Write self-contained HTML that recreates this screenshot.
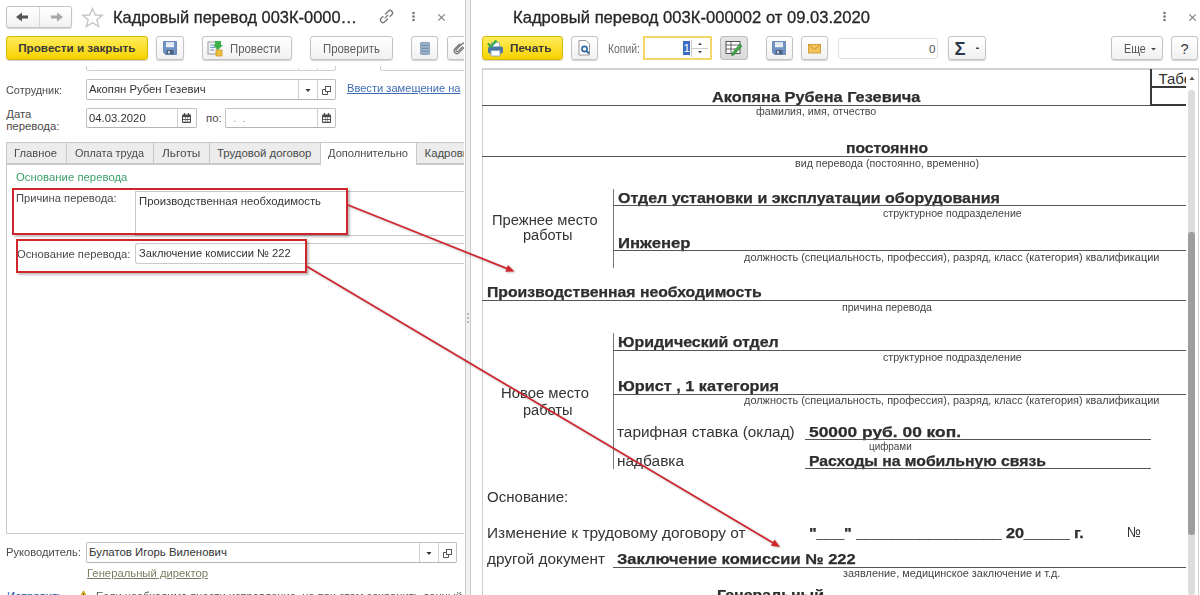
<!DOCTYPE html>
<html><head><meta charset="utf-8"><style>
html,body{margin:0;padding:0}
body{width:1200px;height:595px;position:relative;overflow:hidden;background:#fff;font-family:"Liberation Sans",sans-serif}
.t{position:absolute;white-space:pre;transform-origin:0 0;font-family:"Liberation Sans",sans-serif}
</style></head><body>
<div style="position:absolute;left:0;top:0;width:464px;height:595px;overflow:hidden">
<div style="position:absolute;left:6px;top:6px;width:66px;height:22px;border:1px solid #c4c4c4;border-radius:3px;background:linear-gradient(#ffffff,#f1f1f1);box-shadow:0 1px 1px rgba(0,0,0,0.18);box-sizing:border-box"></div>
<div style="position:absolute;left:39px;top:7px;width:1px;height:20px;background:#d8d8d8"></div>
<svg style="position:absolute;left:14px;top:10px;" width="16" height="14" viewBox="0 0 16 14"><path d="M2 7 L8 2.5 L8 5.6 L14 5.6 L14 8.4 L8 8.4 L8 11.5 Z" fill="#555"/></svg>
<svg style="position:absolute;left:49px;top:10px;" width="16" height="14" viewBox="0 0 16 14"><path d="M14 7 L8 2.5 L8 5.6 L2 5.6 L2 8.4 L8 8.4 L8 11.5 Z" fill="#a8a8a8"/></svg>
<svg style="position:absolute;left:81px;top:7px;" width="23" height="21" viewBox="0 0 23 21"><path d="M11.5 1.5 L14.3 8 L21.3 8.3 L15.8 12.7 L17.7 19.5 L11.5 15.6 L5.3 19.5 L7.2 12.7 L1.7 8.3 L8.7 8 Z" fill="none" stroke="#c4c4c4" stroke-width="1.3"/></svg>
<div class="t" style="left:113.0px;top:8.72px;font-size:16.4px;line-height:16.4px;font-weight:400;color:#262626;transform:scaleX(1.0021);-webkit-text-stroke:0.3px #262626">Кадровый перевод 003К-0000…</div>
<svg style="position:absolute;left:378px;top:8px;" width="17" height="17" viewBox="0 0 17 17"><g transform="rotate(-45 8.5 8.5)" fill="none" stroke="#7a7a7a" stroke-width="1.3" stroke-linecap="round"><path d="M9.5 6 H13.5 A2.5 2.5 0 0 1 13.5 11 H11"/><path d="M7.5 11 H3.5 A2.5 2.5 0 0 1 3.5 6 H6"/><path d="M6.5 8.5 H10.5"/></g></svg>
<svg style="position:absolute;left:411px;top:11px;" width="5" height="11" viewBox="0 0 5 11"><g fill="#777"><circle cx="2.5" cy="2" r="1.3"/><circle cx="2.5" cy="5.5" r="1.3"/><circle cx="2.5" cy="9" r="1.3"/></g></svg>
<svg style="position:absolute;left:436.5px;top:12.5px;" width="9" height="9" viewBox="0 0 9 9"><path d="M1.3 1.3 L7.7 7.7 M7.7 1.3 L1.3 7.7" stroke="#7a7a7a" stroke-width="1.1"/></svg>
<div style="position:absolute;left:6px;top:36px;width:142px;height:24px;border:1px solid #d7b800;border-radius:3px;background:linear-gradient(#ffec5c,#f7d200);box-shadow:0 1px 1px rgba(0,0,0,0.18);box-sizing:border-box"></div>
<div class="t" style="left:18.2px;top:42.40px;font-size:11.7px;line-height:11.7px;font-weight:700;color:#3a3a3a;">Провести и закрыть</div>
<div style="position:absolute;left:156px;top:36px;width:28px;height:24px;border:1px solid #c4c4c4;border-radius:3px;background:linear-gradient(#ffffff,#f1f1f1);box-shadow:0 1px 1px rgba(0,0,0,0.18);box-sizing:border-box"></div>
<svg style="position:absolute;left:163px;top:41px;" width="14" height="14" viewBox="0 0 14 14"><path d="M0.5 0.5 H13.5 V13.5 H2.5 L0.5 11.5 Z" fill="#6f93c4" stroke="#5b7fb2" stroke-width="0.8"/><rect x="3" y="1.2" width="8" height="5" fill="#eef2f7"/><path d="M3.5 3h7" stroke="#c9d4e2" stroke-width="0.8"/><rect x="3.5" y="9" width="7" height="4.3" fill="#4d5f78"/><rect x="5" y="10" width="2" height="2.5" fill="#c8d2de"/></svg>
<div style="position:absolute;left:202px;top:36px;width:90px;height:24px;border:1px solid #c4c4c4;border-radius:3px;background:linear-gradient(#ffffff,#f1f1f1);box-shadow:0 1px 1px rgba(0,0,0,0.18);box-sizing:border-box"></div>
<svg style="position:absolute;left:207px;top:40px;" width="17" height="17" viewBox="0 0 17 17"><rect x="1" y="2" width="9" height="12" fill="#f4f4f4" stroke="#9a9a9a"/><path d="M3 5h5M3 7.5h5M3 10h4" stroke="#6a9ad0" stroke-width="1"/><path d="M8 1 L14 1 L14 5 L16 5 L11 10 L6 5 L8 5 Z" fill="#3db04a"/><rect x="9" y="10" width="6" height="6" fill="#f0c040" stroke="#c89a20" stroke-width="0.8"/></svg>
<div class="t" style="left:229.7px;top:42.76px;font-size:12.1px;line-height:12.1px;font-weight:400;color:#5e5e5e;transform:scaleX(0.9399);">Провести</div>
<div style="position:absolute;left:310px;top:36px;width:83px;height:24px;border:1px solid #c4c4c4;border-radius:3px;background:linear-gradient(#ffffff,#f1f1f1);box-shadow:0 1px 1px rgba(0,0,0,0.18);box-sizing:border-box"></div>
<div class="t" style="left:323.0px;top:42.76px;font-size:12.1px;line-height:12.1px;font-weight:400;color:#5e5e5e;transform:scaleX(0.9424);">Проверить</div>
<div style="position:absolute;left:411px;top:36px;width:27px;height:24px;border:1px solid #c4c4c4;border-radius:3px;background:linear-gradient(#ffffff,#f1f1f1);box-shadow:0 1px 1px rgba(0,0,0,0.18);box-sizing:border-box"></div>
<svg style="position:absolute;left:420px;top:42px;" width="10" height="13" viewBox="0 0 10 13"><g fill="#9db2c8" stroke="#6d8aa8" stroke-width="0.8"><rect x="0.4" y="0.4" width="9.2" height="3" rx="1.2"/><rect x="0.4" y="3.4" width="9.2" height="3" rx="1.2"/><rect x="0.4" y="6.4" width="9.2" height="3" rx="1.2"/><rect x="0.4" y="9.4" width="9.2" height="3" rx="1.2"/></g></svg>
<div style="position:absolute;left:447px;top:36px;width:28px;height:24px;border:1px solid #c4c4c4;border-radius:3px;background:linear-gradient(#ffffff,#f1f1f1);box-shadow:0 1px 1px rgba(0,0,0,0.18);box-sizing:border-box"></div>
<svg style="position:absolute;left:451px;top:39px;" width="18" height="18" viewBox="0 0 18 18"><g transform="rotate(45 9 9)"><path d="M10 6 L10 12.5 Q10 14 8.75 14 Q7.5 14 7.5 12.5 L7.5 4.5 Q7.5 2.5 9.5 2.5 Q11.5 2.5 11.5 4.5 L11.5 13 Q11.5 16 9 16 Q6 16 6 13 L6 6" fill="none" stroke="#6e6e6e" stroke-width="1.2"/></g></svg>
<div style="position:absolute;left:86px;top:66px;width:250px;height:5px;border:1px solid #cfcfcf;border-top:none;border-radius:0 0 3px 3px;box-sizing:border-box"></div>
<div style="position:absolute;left:298px;top:68px;width:1px;height:2px;background:#d8d8d8"></div>
<div style="position:absolute;left:317px;top:68px;width:1px;height:2px;background:#d8d8d8"></div>
<div style="position:absolute;left:380px;top:66px;width:100px;height:5px;border:1px solid #cfcfcf;border-top:none;border-radius:0 0 3px 3px;box-sizing:border-box"></div>
<div class="t" style="left:6.2px;top:84.55px;font-size:11.4px;line-height:11.4px;font-weight:400;color:#4a4a4a;transform:scaleX(0.9573);">Сотрудник:</div>
<div style="position:absolute;left:86px;top:79px;width:250px;height:21px;border:1px solid #c2c2c2;border-bottom-color:#b4b4b4;border-radius:2px;background:#fff;box-sizing:border-box"></div>
<div style="position:absolute;left:298px;top:80px;width:1px;height:19px;background:#d0d0d0"></div>
<div style="position:absolute;left:317px;top:80px;width:1px;height:19px;background:#d0d0d0"></div>
<div class="t" style="left:89.4px;top:84.35px;font-size:11.4px;line-height:11.4px;font-weight:400;color:#333;transform:scaleX(0.9905);">Акопян Рубен Гезевич</div>
<svg style="position:absolute;left:305px;top:88px;" width="6" height="5" viewBox="0 0 6 5"><path d="M0.5 1 L5.5 1 L3 4 Z" fill="#333"/></svg>
<svg style="position:absolute;left:321px;top:85px;" width="11" height="11" viewBox="0 0 11 11"><g fill="none" stroke="#555" stroke-width="1"><rect x="4.5" y="1.5" width="5" height="5"/><path d="M4 4.5 H1.5 V9.5 H6.5 V7"/></g></svg>
<div class="t" style="left:346.8px;top:82.65px;font-size:11.4px;line-height:11.4px;font-weight:400;color:#3d6bb3;transform:scaleX(0.9752);text-decoration:underline">Ввести замещение на</div>
<div class="t" style="left:6.2px;top:109.35px;font-size:11.4px;line-height:11.4px;font-weight:400;color:#4a4a4a;">Дата</div>
<div class="t" style="left:6.2px;top:121.35px;font-size:11.4px;line-height:11.4px;font-weight:400;color:#4a4a4a;">перевода:</div>
<div style="position:absolute;left:86px;top:108px;width:111px;height:20px;border:1px solid #c2c2c2;border-bottom-color:#b4b4b4;border-radius:2px;background:#fff;box-sizing:border-box"></div>
<div style="position:absolute;left:177px;top:109px;width:1px;height:18px;background:#d0d0d0"></div>
<div class="t" style="left:89.4px;top:112.85px;font-size:11.4px;line-height:11.4px;font-weight:400;color:#333;transform:scaleX(0.9945);">04.03.2020</div>
<svg style="position:absolute;left:182px;top:113px;" width="9" height="10" viewBox="0 0 9 10"><g><rect x="0" y="1.5" width="9" height="8.5" rx="1" fill="#4a4a4a"/><rect x="1.8" y="0" width="1.4" height="2.6" rx="0.5" fill="#4a4a4a"/><rect x="5.8" y="0" width="1.4" height="2.6" rx="0.5" fill="#4a4a4a"/><g fill="#fff"><rect x="1" y="4.2" width="2" height="1.8"/><rect x="3.5" y="4.2" width="2" height="1.8"/><rect x="6" y="4.2" width="2" height="1.8"/><rect x="1" y="6.9" width="2" height="1.8"/><rect x="3.5" y="6.9" width="2" height="1.8"/><rect x="6" y="6.9" width="2" height="1.8"/></g></g></svg>
<div class="t" style="left:206.0px;top:112.85px;font-size:11.4px;line-height:11.4px;font-weight:400;color:#4a4a4a;">по:</div>
<div style="position:absolute;left:225px;top:108px;width:111px;height:20px;border:1px solid #c2c2c2;border-bottom-color:#b4b4b4;border-radius:2px;background:#fff;box-sizing:border-box"></div>
<div style="position:absolute;left:317px;top:109px;width:1px;height:18px;background:#d0d0d0"></div>
<div class="t" style="left:233.0px;top:112.85px;font-size:11.4px;line-height:11.4px;font-weight:400;color:#999;">.  .</div>
<svg style="position:absolute;left:322px;top:113px;" width="9" height="10" viewBox="0 0 9 10"><g><rect x="0" y="1.5" width="9" height="8.5" rx="1" fill="#4a4a4a"/><rect x="1.8" y="0" width="1.4" height="2.6" rx="0.5" fill="#4a4a4a"/><rect x="5.8" y="0" width="1.4" height="2.6" rx="0.5" fill="#4a4a4a"/><g fill="#fff"><rect x="1" y="4.2" width="2" height="1.8"/><rect x="3.5" y="4.2" width="2" height="1.8"/><rect x="6" y="4.2" width="2" height="1.8"/><rect x="1" y="6.9" width="2" height="1.8"/><rect x="3.5" y="6.9" width="2" height="1.8"/><rect x="6" y="6.9" width="2" height="1.8"/></g></g></svg>
<div style="position:absolute;left:6px;top:164px;width:460px;height:370px;border:1px solid #c9c9c9;box-sizing:border-box;background:#fff"></div>
<div style="position:absolute;left:6px;top:142px;width:61px;height:22px;border:1px solid #c9c9c9;box-sizing:border-box;background:#ececec"></div>
<div class="t" style="left:14.4px;top:147.85px;font-size:11.4px;line-height:11.4px;font-weight:400;color:#4a4a4a;transform:scaleX(0.9878);">Главное</div>
<div style="position:absolute;left:66px;top:142px;width:88px;height:22px;border:1px solid #c9c9c9;box-sizing:border-box;background:#ececec"></div>
<div class="t" style="left:75.0px;top:147.85px;font-size:11.4px;line-height:11.4px;font-weight:400;color:#4a4a4a;transform:scaleX(0.9573);">Оплата труда</div>
<div style="position:absolute;left:153px;top:142px;width:57px;height:22px;border:1px solid #c9c9c9;box-sizing:border-box;background:#ececec"></div>
<div class="t" style="left:161.6px;top:147.85px;font-size:11.4px;line-height:11.4px;font-weight:400;color:#4a4a4a;transform:scaleX(1.0431);">Льготы</div>
<div style="position:absolute;left:209px;top:142px;width:112px;height:22px;border:1px solid #c9c9c9;box-sizing:border-box;background:#ececec"></div>
<div class="t" style="left:217.0px;top:147.85px;font-size:11.4px;line-height:11.4px;font-weight:400;color:#4a4a4a;">Трудовой договор</div>
<div style="position:absolute;left:320px;top:142px;width:97px;height:23px;border:1px solid #c9c9c9;border-bottom:none;box-sizing:border-box;background:#fff"></div>
<div class="t" style="left:328.0px;top:147.85px;font-size:11.4px;line-height:11.4px;font-weight:400;color:#4a4a4a;transform:scaleX(0.9758);">Дополнительно</div>
<div style="position:absolute;left:416px;top:142px;width:65px;height:22px;border:1px solid #c9c9c9;box-sizing:border-box;background:#ececec"></div>
<div class="t" style="left:424.5px;top:147.85px;font-size:11.4px;line-height:11.4px;font-weight:400;color:#4a4a4a;">Кадровый перевод</div>
<div class="t" style="left:16.0px;top:171.85px;font-size:11.4px;line-height:11.4px;font-weight:400;color:#3c9f67;transform:scaleX(0.9967);">Основание перевода</div>
<div class="t" style="left:16.0px;top:193.35px;font-size:11.4px;line-height:11.4px;font-weight:400;color:#4a4a4a;transform:scaleX(0.9823);">Причина перевода:</div>
<div style="position:absolute;left:135px;top:191px;width:331px;height:45px;border:1px solid #c9c9c9;border-right:none;box-sizing:border-box;background:#fff"></div>
<div class="t" style="left:138.7px;top:195.85px;font-size:11.4px;line-height:11.4px;font-weight:400;color:#333;transform:scaleX(0.9929);">Производственная необходимость</div>
<div class="t" style="left:16.8px;top:249.15px;font-size:11.4px;line-height:11.4px;font-weight:400;color:#4a4a4a;transform:scaleX(0.9876);">Основание перевода:</div>
<div style="position:absolute;left:135px;top:243px;width:331px;height:21px;border:1px solid #c9c9c9;border-right:none;border-radius:3px 0 0 3px;box-sizing:border-box;background:#fff"></div>
<div class="t" style="left:138.7px;top:248.35px;font-size:11.4px;line-height:11.4px;font-weight:400;color:#333;transform:scaleX(0.9787);">Заключение комиссии № 222</div>
<div class="t" style="left:6.2px;top:547.35px;font-size:11.4px;line-height:11.4px;font-weight:400;color:#4a4a4a;transform:scaleX(0.9796);">Руководитель:</div>
<div style="position:absolute;left:86px;top:542px;width:371px;height:21px;border:1px solid #c2c2c2;border-bottom-color:#b4b4b4;border-radius:2px;background:#fff;box-sizing:border-box"></div>
<div style="position:absolute;left:419px;top:543px;width:1px;height:19px;background:#d0d0d0"></div>
<div style="position:absolute;left:438px;top:543px;width:1px;height:19px;background:#d0d0d0"></div>
<div class="t" style="left:89.0px;top:547.35px;font-size:11.4px;line-height:11.4px;font-weight:400;color:#333;">Булатов Игорь Виленович</div>
<svg style="position:absolute;left:426px;top:551px;" width="6" height="5" viewBox="0 0 6 5"><path d="M0.5 1 L5.5 1 L3 4 Z" fill="#333"/></svg>
<svg style="position:absolute;left:442px;top:548px;" width="11" height="11" viewBox="0 0 11 11"><g fill="none" stroke="#555" stroke-width="1"><rect x="4.5" y="1.5" width="5" height="5"/><path d="M4 4.5 H1.5 V9.5 H6.5 V7"/></g></svg>
<div class="t" style="left:87.0px;top:568.35px;font-size:11.4px;line-height:11.4px;font-weight:400;color:#7c7c60;transform:scaleX(0.9904);text-decoration:underline">Генеральный директор</div>
<div class="t" style="left:7.0px;top:590.85px;font-size:11.4px;line-height:11.4px;font-weight:400;color:#2f5a9e;text-decoration:underline">Исправить</div>
<svg style="position:absolute;left:78px;top:589.5px;" width="11" height="10" viewBox="0 0 11 10"><path d="M5.5 0.8 L10.5 9.5 L0.5 9.5 Z" fill="#f2c51c" stroke="#b8940a" stroke-width="0.8"/><path d="M5.5 3.5 V6.5" stroke="#333" stroke-width="1"/></svg>
<div class="t" style="left:96.0px;top:590.85px;font-size:11.4px;line-height:11.4px;font-weight:400;color:#555;transform:scaleX(0.9791);">Если необходимо внести исправление, но при этом сохранить данный</div>
</div>
<div style="position:absolute;left:465px;top:0px;width:6px;height:595px;background:#f2f2f2;border-left:1px solid #c9c9c9;border-right:1px solid #c9c9c9;box-sizing:border-box"></div>
<svg style="position:absolute;left:466px;top:312px;" width="4" height="12" viewBox="0 0 4 12"><g fill="#999"><circle cx="2" cy="2" r="0.9"/><circle cx="2" cy="6" r="0.9"/><circle cx="2" cy="10" r="0.9"/></g></svg>
<div class="t" style="left:512.7px;top:8.92px;font-size:16.4px;line-height:16.4px;font-weight:400;color:#262626;transform:scaleX(1.0121);-webkit-text-stroke:0.3px #262626">Кадровый перевод 003К-000002 от 09.03.2020</div>
<svg style="position:absolute;left:1162px;top:11px;" width="5" height="11" viewBox="0 0 5 11"><g fill="#777"><circle cx="2.5" cy="2" r="1.3"/><circle cx="2.5" cy="5.5" r="1.3"/><circle cx="2.5" cy="9" r="1.3"/></g></svg>
<svg style="position:absolute;left:1188px;top:12.5px;" width="9" height="9" viewBox="0 0 9 9"><path d="M1.3 1.3 L7.7 7.7 M7.7 1.3 L1.3 7.7" stroke="#7a7a7a" stroke-width="1.1"/></svg>
<div style="position:absolute;left:482px;top:36px;width:81px;height:24px;border:1px solid #d7b800;border-radius:3px;background:linear-gradient(#ffec5c,#f7d200);box-shadow:0 1px 1px rgba(0,0,0,0.18);box-sizing:border-box"></div>
<svg style="position:absolute;left:486px;top:39px;" width="19" height="18" viewBox="0 0 19 18"><rect x="5.5" y="3.5" width="8" height="5" fill="#fff" stroke="#a0a8b0" stroke-width="0.8"/><rect x="2" y="7.5" width="15" height="7" rx="2" fill="#4b76a6"/><rect x="5" y="11.5" width="9" height="5.5" fill="#fff" stroke="#7f9fc0" stroke-width="0.8"/><path d="M2 4.5 L5 7.5 L10.5 1.5" fill="none" stroke="#33a84c" stroke-width="2.3"/></svg>
<div class="t" style="left:510.0px;top:42.40px;font-size:11.7px;line-height:11.7px;font-weight:700;color:#3a3a3a;transform:scaleX(1.0168);">Печать</div>
<div style="position:absolute;left:571px;top:36px;width:27px;height:24px;border:1px solid #c4c4c4;border-radius:3px;background:linear-gradient(#ffffff,#f1f1f1);box-shadow:0 1px 1px rgba(0,0,0,0.18);box-sizing:border-box"></div>
<svg style="position:absolute;left:578px;top:40px;" width="13" height="16" viewBox="0 0 13 16"><path d="M1 0.5 L8 0.5 L11.5 4 L11.5 15 L1 15 Z" fill="#fff" stroke="#999"/><circle cx="6.5" cy="9" r="2.6" fill="none" stroke="#2f67a8" stroke-width="1.6"/><path d="M8.5 11 L11 13.5" stroke="#2f67a8" stroke-width="2"/></svg>
<div class="t" style="left:607.8px;top:42.59px;font-size:12.3px;line-height:12.3px;font-weight:400;color:#6a6a6a;transform:scaleX(0.8459);">Копий:</div>
<div style="position:absolute;left:643px;top:36px;width:69px;height:24px;border:2px solid #f3d867;border-radius:1px;box-sizing:border-box;background:#fff"></div>
<div style="position:absolute;left:683px;top:41px;width:7px;height:14px;background:#3c6cc4"></div>
<div class="t" style="left:683.5px;top:42.40px;font-size:11.7px;line-height:11.7px;font-weight:400;color:#fff;">1</div>
<div style="position:absolute;left:691px;top:40px;width:1px;height:17px;background:#ccc"></div>
<div style="position:absolute;left:692px;top:48px;width:16px;height:1px;background:#ccc"></div>
<svg style="position:absolute;left:697px;top:41px;" width="6" height="14" viewBox="0 0 6 14"><path d="M1 4 L3 1.5 L5 4 Z M1 10 L3 12.5 L5 10 Z" fill="#555"/></svg>
<div style="position:absolute;left:720px;top:36px;width:28px;height:24px;border:1px solid #bcbcbc;border-radius:3px;background:linear-gradient(#e6e6e6,#dadada);box-sizing:border-box"></div>
<svg style="position:absolute;left:725px;top:40px;" width="18" height="16" viewBox="0 0 18 16"><rect x="1" y="1.5" width="14" height="12" fill="#fff" stroke="#555"/><path d="M1 5h14M1 9h14M6 1.5v12" stroke="#555" stroke-width="0.9"/><path d="M7 13 L15 4 L17 6 L9 15 L6.5 15.5 Z" fill="#43a84a" stroke="#2c7a30" stroke-width="0.6"/></svg>
<div style="position:absolute;left:766px;top:36px;width:27px;height:24px;border:1px solid #c4c4c4;border-radius:3px;background:linear-gradient(#ffffff,#f1f1f1);box-shadow:0 1px 1px rgba(0,0,0,0.18);box-sizing:border-box"></div>
<svg style="position:absolute;left:772px;top:41px;" width="14" height="14" viewBox="0 0 14 14"><path d="M0.5 0.5 H13.5 V13.5 H2.5 L0.5 11.5 Z" fill="#6f93c4" stroke="#5b7fb2" stroke-width="0.8"/><rect x="3" y="1.2" width="8" height="5" fill="#eef2f7"/><path d="M3.5 3h7" stroke="#c9d4e2" stroke-width="0.8"/><rect x="3.5" y="9" width="7" height="4.3" fill="#4d5f78"/><rect x="5" y="10" width="2" height="2.5" fill="#c8d2de"/></svg>
<div style="position:absolute;left:801px;top:36px;width:27px;height:24px;border:1px solid #c4c4c4;border-radius:3px;background:linear-gradient(#ffffff,#f1f1f1);box-shadow:0 1px 1px rgba(0,0,0,0.18);box-sizing:border-box"></div>
<svg style="position:absolute;left:808px;top:44px;" width="13" height="10" viewBox="0 0 13 10"><rect x="0.5" y="0.5" width="12" height="8.5" fill="#f3c45c" stroke="#d09a30" stroke-width="0.9"/><path d="M0.5 0.5 L6.5 5.5 L12.5 0.5" fill="none" stroke="#c98a20" stroke-width="0.9"/></svg>
<div style="position:absolute;left:838px;top:38px;width:100px;height:21px;border:1px solid #e0e0e0;border-radius:3px;box-sizing:border-box;background:#fff"></div>
<div class="t" style="left:929.0px;top:42.60px;font-size:11.7px;line-height:11.7px;font-weight:400;color:#555;">0</div>
<div style="position:absolute;left:948px;top:36px;width:38px;height:24px;border:1px solid #c4c4c4;border-radius:3px;background:linear-gradient(#ffffff,#f1f1f1);box-shadow:0 1px 1px rgba(0,0,0,0.18);box-sizing:border-box"></div>
<div class="t" style="left:954.5px;top:39.84px;font-size:18.5px;line-height:18.5px;font-weight:700;color:#2b3a4a;">Σ</div>
<svg style="position:absolute;left:976px;top:47px;" width="4" height="3" viewBox="0 0 4 3"><rect x="0" y="0.5" width="3" height="1.5" fill="#444"/></svg>
<div style="position:absolute;left:1111px;top:36px;width:52px;height:24px;border:1px solid #c4c4c4;border-radius:3px;background:linear-gradient(#ffffff,#f1f1f1);box-shadow:0 1px 1px rgba(0,0,0,0.18);box-sizing:border-box"></div>
<div class="t" style="left:1123.5px;top:42.76px;font-size:12.1px;line-height:12.1px;font-weight:400;color:#555;transform:scaleX(0.8858);">Еще</div>
<svg style="position:absolute;left:1151px;top:48px;" width="6" height="3" viewBox="0 0 6 3"><path d="M0 0 L5 0 L2.5 2.5 Z" fill="#444"/></svg>
<div style="position:absolute;left:1171px;top:36px;width:27px;height:24px;border:1px solid #c4c4c4;border-radius:3px;background:linear-gradient(#ffffff,#f1f1f1);box-shadow:0 1px 1px rgba(0,0,0,0.18);box-sizing:border-box"></div>
<div class="t" style="left:1180.5px;top:41.73px;font-size:14.5px;line-height:14.5px;font-weight:400;color:#3a3a3a;">?</div>
<div style="position:absolute;left:482px;top:68px;width:717px;height:540px;border:1px solid #cfcfcf;border-top:2px solid #d2d2d2;box-sizing:border-box;background:#fff"></div>
<div style="position:absolute;left:1188px;top:90px;width:7px;height:505px;background:#dcdcdc;border-radius:3px"></div>
<div style="position:absolute;left:1188px;top:232px;width:7px;height:303px;background:#9d9d9d;border-radius:3px"></div>
<svg style="position:absolute;left:1189px;top:76px;" width="6" height="5" viewBox="0 0 6 5"><path d="M0.5 4 L3 0.5 L5.5 4 Z" fill="#555"/></svg>
<div style="position:absolute;left:1150px;top:69px;width:2px;height:37px;background:#3a3a3a"></div>
<div style="position:absolute;left:1150px;top:86px;width:36px;height:2px;background:#3a3a3a"></div>
<div style="position:absolute;left:1150px;top:104px;width:36px;height:2px;background:#3a3a3a"></div>
<div style="position:absolute;left:1152px;top:69px;width:34px;height:17px;overflow:hidden"><div style="position:absolute;left:6.5px;top:2px;font-family:'Liberation Sans';font-size:15px;line-height:15px;color:#333;white-space:nowrap">Табельный</div></div>
<div style="position:absolute;left:482px;top:105px;width:668px;height:1px;background:#555"></div>
<div class="t" style="left:711.7px;top:90.25px;font-size:14px;line-height:14px;font-weight:700;color:#2e2e2e;transform:scaleX(1.1660);-webkit-text-stroke:0.25px #2e2e2e">Акопяна Рубена Гезевича</div>
<div class="t" style="left:756.0px;top:106.53px;font-size:10px;line-height:10px;font-weight:400;color:#444;transform:scaleX(1.0634);">фамилия, имя, отчество</div>
<div class="t" style="left:846.4px;top:141.15px;font-size:14px;line-height:14px;font-weight:700;color:#2e2e2e;transform:scaleX(1.1190);-webkit-text-stroke:0.25px #2e2e2e">постоянно</div>
<div style="position:absolute;left:482px;top:156px;width:704px;height:1px;background:#555"></div>
<div class="t" style="left:795.0px;top:158.73px;font-size:10px;line-height:10px;font-weight:400;color:#444;transform:scaleX(1.0694);">вид перевода (постоянно, временно)</div>
<div style="position:absolute;left:613px;top:189px;width:1px;height:79px;background:#777"></div>
<div class="t" style="left:617.6px;top:191.35px;font-size:14px;line-height:14px;font-weight:700;color:#2e2e2e;transform:scaleX(1.1425);-webkit-text-stroke:0.25px #2e2e2e">Отдел установки и эксплуатации оборудования</div>
<div style="position:absolute;left:613px;top:205px;width:573px;height:1px;background:#555"></div>
<div class="t" style="left:883.0px;top:208.53px;font-size:10px;line-height:10px;font-weight:400;color:#444;transform:scaleX(1.0662);">структурное подразделение</div>
<div class="t" style="left:491.8px;top:213.82px;font-size:13.8px;line-height:13.8px;font-weight:400;color:#333;transform:scaleX(1.0683);">Прежнее место</div>
<div class="t" style="left:522.5px;top:229.12px;font-size:13.8px;line-height:13.8px;font-weight:400;color:#333;transform:scaleX(1.0564);">работы</div>
<div class="t" style="left:617.6px;top:235.55px;font-size:14px;line-height:14px;font-weight:700;color:#2e2e2e;transform:scaleX(1.1916);-webkit-text-stroke:0.25px #2e2e2e">Инженер</div>
<div style="position:absolute;left:613px;top:250px;width:573px;height:1px;background:#555"></div>
<div class="t" style="left:744.0px;top:252.53px;font-size:10px;line-height:10px;font-weight:400;color:#444;transform:scaleX(1.0928);">должность (специальность, профессия), разряд, класс (категория) квалификации</div>
<div class="t" style="left:487.0px;top:285.05px;font-size:14px;line-height:14px;font-weight:700;color:#2e2e2e;transform:scaleX(1.1257);-webkit-text-stroke:0.25px #2e2e2e">Производственная необходимость</div>
<div style="position:absolute;left:482px;top:300px;width:704px;height:1px;background:#555"></div>
<div class="t" style="left:842.0px;top:302.54px;font-size:10px;line-height:10px;font-weight:400;color:#444;transform:scaleX(1.0544);">причина перевода</div>
<div style="position:absolute;left:613px;top:333px;width:1px;height:136px;background:#777"></div>
<div class="t" style="left:617.6px;top:335.45px;font-size:14px;line-height:14px;font-weight:700;color:#2e2e2e;transform:scaleX(1.1385);-webkit-text-stroke:0.25px #2e2e2e">Юридический отдел</div>
<div style="position:absolute;left:613px;top:350px;width:573px;height:1px;background:#555"></div>
<div class="t" style="left:883.0px;top:352.54px;font-size:10px;line-height:10px;font-weight:400;color:#444;transform:scaleX(1.0662);">структурное подразделение</div>
<div class="t" style="left:500.5px;top:386.62px;font-size:13.8px;line-height:13.8px;font-weight:400;color:#333;transform:scaleX(1.0746);">Новое место</div>
<div class="t" style="left:522.5px;top:404.32px;font-size:13.8px;line-height:13.8px;font-weight:400;color:#333;transform:scaleX(1.0564);">работы</div>
<div class="t" style="left:617.6px;top:379.05px;font-size:14px;line-height:14px;font-weight:700;color:#2e2e2e;transform:scaleX(1.1621);-webkit-text-stroke:0.25px #2e2e2e">Юрист , 1 категория</div>
<div style="position:absolute;left:613px;top:394px;width:573px;height:1px;background:#555"></div>
<div class="t" style="left:744.0px;top:395.74px;font-size:10px;line-height:10px;font-weight:400;color:#444;transform:scaleX(1.0928);">должность (специальность, профессия), разряд, класс (категория) квалификации</div>
<div class="t" style="left:617.3px;top:425.82px;font-size:13.8px;line-height:13.8px;font-weight:400;color:#333;transform:scaleX(1.1113);">тарифная ставка (оклад)</div>
<div class="t" style="left:809.0px;top:424.85px;font-size:14px;line-height:14px;font-weight:700;color:#2e2e2e;transform:scaleX(1.2399);-webkit-text-stroke:0.25px #2e2e2e">50000 руб. 00 коп.</div>
<div style="position:absolute;left:805px;top:439px;width:346px;height:1px;background:#555"></div>
<div class="t" style="left:869.3px;top:442.24px;font-size:10px;line-height:10px;font-weight:400;color:#444;transform:scaleX(0.9901);">цифрами</div>
<div class="t" style="left:617.3px;top:454.52px;font-size:13.8px;line-height:13.8px;font-weight:400;color:#333;transform:scaleX(1.1175);">надбавка</div>
<div class="t" style="left:809.0px;top:453.85px;font-size:14px;line-height:14px;font-weight:700;color:#2e2e2e;transform:scaleX(1.1247);-webkit-text-stroke:0.25px #2e2e2e">Расходы на мобильную связь</div>
<div style="position:absolute;left:805px;top:468px;width:346px;height:1px;background:#555"></div>
<div class="t" style="left:486.7px;top:490.62px;font-size:13.8px;line-height:13.8px;font-weight:400;color:#333;transform:scaleX(1.0897);">Основание:</div>
<div class="t" style="left:486.7px;top:527.32px;font-size:13.8px;line-height:13.8px;font-weight:400;color:#333;transform:scaleX(1.1169);">Изменение к трудовому договору от</div>
<div class="t" style="left:809.3px;top:525.85px;font-size:14px;line-height:14px;font-weight:700;color:#2e2e2e;transform:scaleX(1.1654);-webkit-text-stroke:0.25px #2e2e2e">&quot;___&quot; ________________ 20_____ г.</div>
<div class="t" style="left:1126.5px;top:525.23px;font-size:14.5px;line-height:14.5px;font-weight:400;color:#333;transform:scaleX(0.8996);">№</div>
<div class="t" style="left:486.7px;top:553.32px;font-size:13.8px;line-height:13.8px;font-weight:400;color:#333;transform:scaleX(1.1114);">другой документ</div>
<div class="t" style="left:617.3px;top:551.75px;font-size:14px;line-height:14px;font-weight:700;color:#2e2e2e;transform:scaleX(1.1794);-webkit-text-stroke:0.25px #2e2e2e">Заключение комиссии № 222</div>
<div style="position:absolute;left:613px;top:567px;width:573px;height:1px;background:#555"></div>
<div class="t" style="left:843.3px;top:568.74px;font-size:10px;line-height:10px;font-weight:400;color:#444;transform:scaleX(1.0907);">заявление, медицинское заключение и т.д.</div>
<div class="t" style="left:717.0px;top:588.05px;font-size:14px;line-height:14px;font-weight:700;color:#2e2e2e;transform:scaleX(1.1368);-webkit-text-stroke:0.25px #2e2e2e">Генеральный</div>
<div style="position:absolute;left:12px;top:188px;width:336px;height:47px;border:2px solid #cf252c;box-sizing:border-box;box-shadow:2px 2px 2px rgba(0,0,0,0.25)"></div>
<div style="position:absolute;left:16px;top:239px;width:291px;height:34px;border:2px solid #cf252c;box-sizing:border-box;box-shadow:2px 2px 2px rgba(0,0,0,0.25)"></div>
<svg style="position:absolute;left:0;top:0;filter:drop-shadow(1px 1px 1px rgba(0,0,0,0.25))" width="1200" height="595"><line x1="348" y1="205" x2="508.46365216880787" y2="269.089086301656" stroke="#cf252c" stroke-width="1.7"/><path d="M514.5 271.5 L505.27103909551215 271.69047473174885 L507.94158965367774 265.00405867258223 Z" fill="#cf252c"/><line x1="307" y1="266.5" x2="774.4091613112903" y2="543.6845026380907" stroke="#cf252c" stroke-width="1.7"/><path d="M780 547 L770.8526277912454 545.7608141081732 L774.5251787152063 539.567885099141 Z" fill="#cf252c"/></svg>
</body></html>
